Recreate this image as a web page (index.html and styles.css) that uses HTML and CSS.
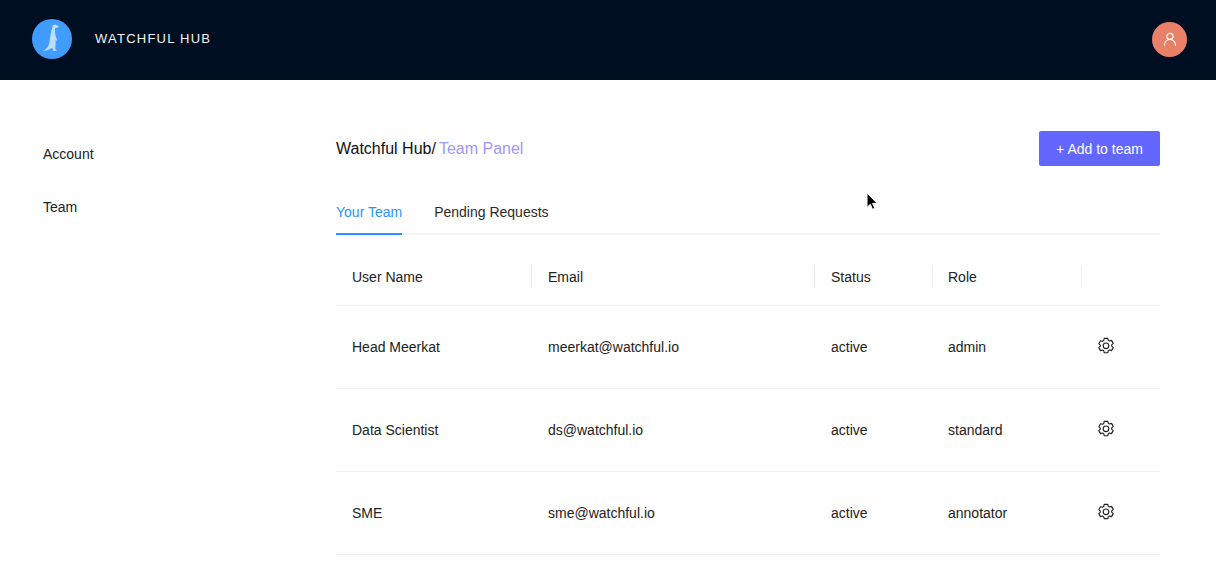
FILE: index.html
```html
<!DOCTYPE html>
<html lang="en">
<head>
<meta charset="utf-8">
<title>Watchful Hub</title>
<link rel="stylesheet" href="styles.css">
</head>
<body>
<header class="topbar">
  <div class="brand">
    <svg class="logo" viewBox="0 0 40 40" width="40" height="40" aria-hidden="true">
      <circle cx="20" cy="20" r="20" fill="#409cff"/>
      <path d="M21 6l2.500-.6 3.500 2-1 1-3 .8c-.3 2.500.3 5.500.7 8.300 1.100 1.700 1.500 3 1.100 4.500l-1.200-1.300c.3 3.500-.4 6.500-.3 9.300l2 1.800-4.300.2-.6-3.200c-2.500 1.400-6.400 3.200-9.900 3.400 3.200-1.600 6-4 6.800-8.500.8-4.800 1.500-11.500 3.700-17.700z" fill="#bcdefb"/>
    </svg>
    <span class="brand-name">WATCHFUL HUB</span>
  </div>
  <div class="avatar">
    <svg viewBox="0 0 16 16" width="14" height="14" fill="none" stroke="#fff" stroke-width="1.300" aria-hidden="true">
      <circle cx="8" cy="5" r="3.500"/>
      <path d="M1.800 15c0-3.400 2.400-6.400 6.200-6.400s6.200 3 6.200 6.400" stroke-linecap="round"/>
    </svg>
  </div>
</header>
<div class="layout">
  <nav class="side">
    <a class="side-link">Account</a>
    <a class="side-link">Team</a>
  </nav>
  <main class="content">
    <div class="title-row">
      <div class="crumbs"><span class="crumb-root">Watchful Hub/</span><span class="crumb-here">Team Panel</span></div>
      <button class="add-btn">+ Add to team</button>
    </div>
    <div class="tabs">
      <span class="tab tab-active">Your Team</span>
      <span class="tab">Pending Requests</span>
    </div>
    <div class="table">
      <div class="row head">
        <div class="cell">User Name</div>
        <div class="cell">Email</div>
        <div class="cell">Status</div>
        <div class="cell">Role</div>
        <div class="cell"></div>
      </div>
      <div class="row">
        <div class="cell">Head Meerkat</div>
        <div class="cell">meerkat@watchful.io</div>
        <div class="cell">active</div>
        <div class="cell">admin</div>
        <div class="cell"><svg class="gear" viewBox="0 0 18 18" width="18" height="18" fill="none" stroke="#222" stroke-width="1.150" stroke-linejoin="round" aria-hidden="true"><path d="M7.200 1.300h3.600l.5 2 1.200.7 2-.6 1.700 3-1.500 1.400v1.400l1.500 1.400-1.700 3-2-.6-1.200.7-.5 2H7.200l-.5-2-1.200-.7-2 .6-1.700-3 1.500-1.400V8.100L1.800 6.700l1.700-3 2 .6 1.200-.7z"/><circle cx="9" cy="8.800" r="2.800"/></svg></div>
      </div>
      <div class="row">
        <div class="cell">Data Scientist</div>
        <div class="cell">ds@watchful.io</div>
        <div class="cell">active</div>
        <div class="cell">standard</div>
        <div class="cell"><svg class="gear" viewBox="0 0 18 18" width="18" height="18" fill="none" stroke="#222" stroke-width="1.150" stroke-linejoin="round" aria-hidden="true"><path d="M7.200 1.300h3.600l.5 2 1.200.7 2-.6 1.700 3-1.500 1.400v1.400l1.500 1.400-1.700 3-2-.6-1.200.7-.5 2H7.200l-.5-2-1.200-.7-2 .6-1.700-3 1.500-1.400V8.100L1.800 6.700l1.700-3 2 .6 1.200-.7z"/><circle cx="9" cy="8.800" r="2.800"/></svg></div>
      </div>
      <div class="row">
        <div class="cell">SME</div>
        <div class="cell">sme@watchful.io</div>
        <div class="cell">active</div>
        <div class="cell">annotator</div>
        <div class="cell"><svg class="gear" viewBox="0 0 18 18" width="18" height="18" fill="none" stroke="#222" stroke-width="1.150" stroke-linejoin="round" aria-hidden="true"><path d="M7.200 1.300h3.600l.5 2 1.200.7 2-.6 1.700 3-1.500 1.400v1.400l1.500 1.400-1.700 3-2-.6-1.200.7-.5 2H7.200l-.5-2-1.200-.7-2 .6-1.700-3 1.500-1.400V8.100L1.800 6.700l1.700-3 2 .6 1.200-.7z"/><circle cx="9" cy="8.800" r="2.800"/></svg></div>
      </div>
    </div>
  </main>
</div>
<svg class="cursor" viewBox="0 0 13 19" width="13" height="19" aria-hidden="true"><path d="M1 1v14.500l3.300-3.200 2.200 5 2.300-1-2.200-4.900h4.600z" fill="#000" stroke="#fff" stroke-width="1"/></svg>
</body>
</html>
```
FILE: styles.css
```css
* { box-sizing: border-box; }
html, body { margin: 0; height: 100%; }
body {
  font-family: "Liberation Sans", Arial, sans-serif;
  background: #fefefe;
  color: #222;
  font-size: 14px;
  overflow: hidden;
  position: relative;
}
.topbar {
  height: 80px;
  background: #000e22;
  display: flex;
  align-items: center;
  justify-content: space-between;
  padding: 0 29px 2px 32px;
}
.brand { display: flex; align-items: center; gap: 23px; }
.logo { display: block; }
.brand-name {
  color: #f2f4f6;
  font-size: 13px;
  line-height: 14px;
  letter-spacing: 1.240px;
}
.avatar {
  width: 35px;
  height: 35px;
  border-radius: 50%;
  background: #e98068;
  display: flex;
  align-items: center;
  justify-content: center;
}
.layout { display: flex; padding: 51px 56px 0 43px; }
.side {
  width: 293px;
  flex: none;
  display: flex;
  flex-direction: column;
  gap: 37px;
  padding-top: 15px;
}
.side-link { color: #222; font-size: 14px; line-height: 16px; }
.content { flex: 1; min-width: 0; }
.title-row {
  display: flex;
  justify-content: space-between;
  align-items: flex-start;
}
.crumbs { font-size: 16px; line-height: 18px; padding-top: 9px; }
.crumb-root { color: #111; margin-right: 3px; }
.crumb-here { color: #9f97fb; }
.add-btn {
  width: 121px;
  height: 35px;
  border: 0;
  border-radius: 2px;
  background: #6366ff;
  color: #fff;
  font: 14px "Liberation Sans", Arial, sans-serif;
  padding: 0;
}
.tabs {
  display: flex;
  gap: 32px;
  margin-top: 24px;
  height: 45px;
  border-bottom: 2px solid #f4f4f4;
}
.tab {
  height: 45px;
  padding-top: 14px;
  line-height: 16px;
  color: #2b2b2b;
}
.tab-active { color: #2a94ff; border-bottom: 2px solid #2a94ff; }
.row {
  display: grid;
  grid-template-columns: 196px 283px 117px 149px 79px;
  height: 83px;
  border-bottom: 1px solid #f0f0f0;
  align-items: center;
}
.row.head { height: 71px; padding-top: 14px; }
.cell { padding-left: 16px; line-height: 16px; color: #222; min-height: 16px; position: relative; }
.head .cell + .cell::before {
  content: "";
  position: absolute;
  left: -1px;
  top: -4px;
  height: 23px;
  width: 1px;
  background: #e9e9e9;
}
.head .cell:nth-child(n+4)::before { left: 0; background: #f1f1f1; }
.gear { display: block; margin-top: -2px; margin-left: -0.5px; }
.cursor { position: absolute; left: 866px; top: 192px; }
```
